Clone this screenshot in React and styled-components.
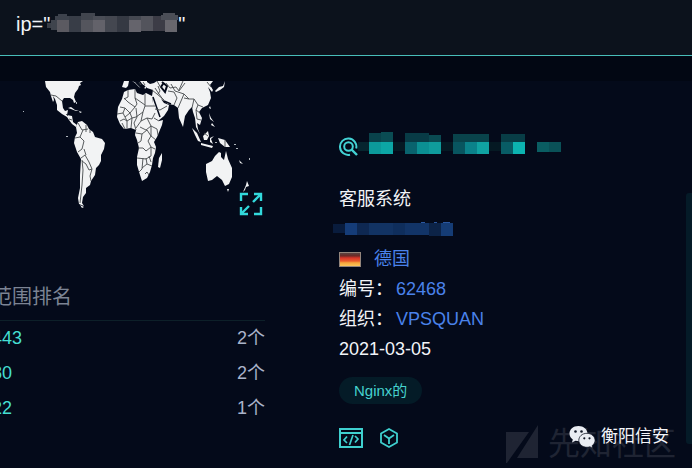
import styled, { createGlobalStyle } from "styled-components";


const ports = [
    { port: "443", count: 2 },
    { port: "80", count: 2 },
    { port: "22", count: 1 },
];

const queryMask = [
    [0, 10, 4, 5, "#3a3f48"],
    [4, 7, 6, 10, "#3f444d"],
    [8, 3, 14, 5, "#3d424c"],
    [11, 1, 9, 3, "#3d424c"],
    [10, 7, 12, 12, "#5b5a61"],
    [22, 3, 12, 16, "#383d47"],
    [34, 0, 14, 7, "#41454e"],
    [34, 7, 12, 12, "#54555d"],
    [46, 3, 12, 4, "#4a4d56"],
    [46, 7, 12, 12, "#63626a"],
    [58, 3, 12, 16, "#444750"],
    [70, 3, 12, 16, "#353943"],
    [82, 3, 12, 4, "#454851"],
    [82, 7, 12, 12, "#65646c"],
    [94, 3, 12, 15, "#53545c"],
    [106, 3, 12, 15, "#3c3c46"],
    [116, 0, 12, 3, "#4b4e57"],
    [114, 2, 17, 5, "#4b4e57"],
    [118, 7, 12, 12, "#68676e"],
];

const titleMask = [
    [0, 10, 12, 9, "#06252f"],
    [11, 1, 12, 9, "#09424b"],
    [23, 0, 12, 10, "#0a4c53"],
    [11, 10, 12, 12, "#0c9a9b"],
    [23, 10, 12, 12, "#0ca6a5"],
    [35, 10, 12, 9, "#051923"],
    [47, 1, 24, 9, "#083b46"],
    [71, 3, 12, 7, "#0a4a52"],
    [47, 10, 12, 12, "#09636e"],
    [59, 10, 12, 12, "#0b8f93"],
    [71, 10, 12, 12, "#0f9b9c"],
    [83, 10, 12, 9, "#051923"],
    [95, 2, 36, 8, "#09434b"],
    [95, 10, 12, 12, "#08555f"],
    [107, 10, 12, 12, "#0b828a"],
    [119, 10, 12, 12, "#10a3a2"],
    [131, 10, 12, 9, "#051923"],
    [143, 2, 24, 8, "#083d46"],
    [143, 10, 12, 12, "#085c65"],
    [155, 10, 12, 12, "#0cb3b0"],
    [179, 10, 12, 10, "#0a5d62"],
    [191, 10, 12, 10, "#0a5157"],
];

const hostMask = [
    [0, 2, 12, 9, "#091c3d"],
    [12, 1, 12, 12, "#153c78"],
    [24, 1, 12, 12, "#0e2852"],
    [36, 1, 24, 12, "#123363"],
    [60, 1, 12, 12, "#0f2e5c"],
    [72, 1, 24, 12, "#123467"],
    [96, 1, 12, 13, "#0c2347"],
    [108, 1, 12, 13, "#153c75"],
    [88, 0, 4, 1, "#2a57a0"],
    [101, 0, 3, 1, "#2a57a0"],
    [110, 0, 7, 1, "#2a57a0"],
];


const Mosaic = ({ cells, width, height, label }) => (
    <MosaicSvg width={width} height={height} viewBox={`0 0 ${width} ${height}`} role="img" aria-label={label}>
        {cells.map(([x, y, w, h, fill], i) => (
            <rect key={i} x={x} y={y} width={w} height={h} fill={fill} />
        ))}
    </MosaicSvg>
);


const WorldMap = () => (
    <MapSvg viewBox="0 81 265 135" aria-hidden="true">
        <g fill="#f2f3f4">
            {/* americas */}
            <path d="M45 81L46 87L50 92L51 96L53 102L54 100L53 96L55 99L57 105L57 110L62 114L67 117L69 120L72 124L76 127L77 125L73 122L72 116L67 115L68 110L65 111L63 108L62 101L64 98L70 98L73 100L74 103L76 102L74 97L75 93L78 89L79 86L81 85L80 83L83 81Z" />
            <path d="M76 127L78 122L82 121L87 125L89 129L93 132L95 137L102 139L105 143L104 149L101 155L101 161L99 165L96 168L95 175L91 181L90 185L86 188L86 193L83 197L82 203L84 206L79 204L78 198L80 188L80 175L81 159L77 152L74 143L75 137L77 133Z" />
            <path d="M68 108L71 107L75 110L79 111L76 111L71 109ZM79 111L82 112L80 113ZM80 205L84 207L82 208Z" />
            {/* europe and africa */}
            <path d="M124 81L129 81L128 86L126 88L122 87ZM132 81L139 84L141 88L139 87L135 83ZM140 81L147 81L147 87L145 89L143 85Z" />
            <path d="M124 92L128 90L135 89L137 93L143 95L146 93L152 96L153 103L157 116L159 121L163 120L162 125L157 137L154 142L156 147L155 153L153 158L152 165L150 172L147 178L142 181L140 175L137 165L137 157L139 148L137 140L135 135L136 130L131 128L124 129L120 124L117 117L118 107L122 99Z" />
            <path d="M162 153L162 160L160 168L158 167L159 158Z" />
            {/* asia */}
            <path d="M147 82L150 84L154 83L157 81L213 81L210 85L213 90L212 92L208 87L210 92L211 98L208 105L202 108L199 112L202 118L200 125L197 123L198 129L200 134L196 127L195 118L193 112L192 107L189 110L185 116L183 127L179 118L178 108L174 105L168 104L164 101L161 99L164 103L169 105L168 110L164 116L158 121L154 111L152 96L153 90L147 88Z" />
            <path d="M215 91L219 87L223 86L225 81L224 87L220 90L216 92ZM210 106L211 109L209 108ZM209 113L211 118L214 122L210 119ZM212 123L215 127L211 125Z" />
            <path d="M192 128L197 133L201 142L198 141L195 135ZM203 136L208 131L209 136L207 140L204 140ZM201 143L213 146L212 148L201 145ZM210 138L214 136L211 139L213 144L210 142ZM218 138L225 140L230 147L225 147L220 143Z" />
            {/* oceania */}
            <path d="M206 164L212 161L215 156L219 152L221 153L221 157L224 160L226 151L228 159L232 168L232 177L229 184L225 186L222 180L217 176L212 180L208 181L206 172ZM227 189L229 189L228 192ZM247 181L249 186L246 187L245 190L243 192L246 185ZM239 160L243 164L240 163Z" />
        </g>
        {/* seas */}
        <path d="M142 85L145 87M162 82L167 86L165 92L161 87L163 84M136 82L143 89" stroke="#040a1a" strokeWidth="2" fill="none" />
        <path d="M153 97L160 117M164 101L171 104" stroke="#040a1a" strokeWidth="1.5" fill="none" />
        {/* borders */}
        <g stroke="#454a4c" strokeWidth="0.9" fill="none">
            <path d="M51 95L56 96L62 101M66 114L68 116M69 119L72 120M78 123L82 130L88 129M86 125L86 132M90 130L90 133M75 138L80 137L83 130M78 152L82 149L84 141L80 137M81 158L85 155L89 162L92 169L89 170L86 164L82 161M82 160L83 170L82 185L80 203M92 169L90 176L91 181M84 149L86 155" />
            <path d="M124 98L128 102L135 107L130 113L125 108L120 107M128 90L128 97L124 99M135 89L135 98L137 104L135 107M145 94L145 106L155 106M135 98L145 105M117 114L123 113L125 108M123 113L125 117L130 113L132 118L136 117L143 112L145 106M136 108L137 117L134 123L136 130M120 121L124 119L127 121L127 128M125 117L127 121L132 118L131 128M122 123L125 129M143 112L141 121L136 128M141 121L147 118L152 119L155 113M147 118L151 126L146 130L140 127M136 133L142 134L141 141L138 143M142 134L147 130L151 136L148 141L151 147L146 151L143 148L138 148M151 126L157 129L158 135M151 136L156 140M151 126L151 136M137 158L146 159L151 156L151 147L155 149M143 158L142 169L139 172M142 168L147 164L152 166M147 164L146 158M149 156L151 162M154 118L159 121M145 174L147 172L149 175" />
            <path d="M155 88L159 94L164 101M152 90L157 94L164 100M155 109L160 110L167 106M157 81L161 88M158 86L160 91L158 94M166 83L170 88L176 87L179 91L185 83M168 91L174 92L177 98L174 105M171 84L175 91L184 94L181 101L178 108M183 81L179 90M184 94L189 99L194 99L192 108M189 99L184 98M194 99L198 105L196 110L200 113M198 105L203 107M196 110L197 119L201 120M207 82L211 87M204 133L208 136M225 140L225 147" />
            <path d="M139 82L141 85M143 82L145 85" />
        </g>
        <g fill="#aeb5bb">
            <rect x="23" y="111" width="1" height="1" />
            <rect x="66" y="136" width="2" height="1" />
            <rect x="76" y="102" width="1" height="2" />
            <rect x="234" y="144" width="2" height="1" />
            <rect x="236" y="148" width="2" height="1" />
            <rect x="249" y="158" width="1" height="2" />
            <rect x="215" y="142" width="2" height="1" />
        </g>
    </MapSvg>
);

const ExpandIcon = () => (
    <svg width="24" height="24" viewBox="0 0 24 24" fill="none" stroke="#32d9dc" strokeWidth="2.4" aria-hidden="true">
        <path d="M2 9V2H9M15 2H22V9M22 2L14 10M22 15V22H15M9 22H2V15M2 22L10 14" />
    </svg>
);

const SearchIcon = () => (
    <svg width="19" height="20" viewBox="0 0 19 20" fill="none" stroke="#43d3d5" strokeWidth="2" aria-hidden="true">
        <path d="M11 17.7A8.2 8.2 0 1 1 17.2 11.5" />
        <circle cx="9.5" cy="9.5" r="4.3" />
        <path d="M12.5 12.5L18 18" strokeWidth="2.4" />
    </svg>
);

const CodeIcon = () => (
    <svg width="24" height="20" viewBox="0 0 24 20" fill="none" stroke="#3fd0cf" strokeWidth="2" aria-hidden="true">
        <path d="M1 1H23V19H1ZM1 5H23" />
        <path d="M8 8.5L5 12L8 15M16 8L19 11L16 14.5M14 7L10.5 17" strokeWidth="1.7" />
    </svg>
);

const CubeIcon = () => (
    <svg width="20" height="20" viewBox="0 0 20 20" fill="none" stroke="#3fd0cf" strokeWidth="1.8" strokeLinejoin="round" aria-hidden="true">
        <path d="M10 1L18 5.5V14.5L10 19L2 14.5V5.5Z" />
        <path d="M5 7L10 10.5L15 7M10 10.5V16" />
    </svg>
);

const GermanFlag = () => (
    <svg width="22" height="15" viewBox="0 0 22 15" role="img" aria-label="德国">
        <defs>
            <linearGradient id="flag" x1="0" y1="0" x2="0" y2="1">
                <stop offset="0" stopColor="#5a4442" />
                <stop offset="0.22" stopColor="#6c2a26" />
                <stop offset="0.38" stopColor="#d8352a" />
                <stop offset="0.62" stopColor="#ea5b2c" />
                <stop offset="0.75" stopColor="#f5a53c" />
                <stop offset="1" stopColor="#fbc65a" />
            </linearGradient>
        </defs>
        <rect width="22" height="15" fill="#93857c" />
        <rect x="1" y="1" width="20" height="13" fill="url(#flag)" />
    </svg>
);

const WechatIcon = () => (
    <svg width="27" height="25" viewBox="0 0 27 25" aria-hidden="true">
        <path d="M9.500 1C4 1 0.500 4.500 0.500 8.500C0.500 11 1.800 13 3.800 14.500L3 17.500L6.500 15.800C8 16.200 9.500 16.300 10.500 16.200C13.500 15.500 18.500 13 18.500 8.500C18.500 4.500 14.500 1 9.500 1Z" fill="#e9ecf2" />
        <path d="M18 8.300C13 8.300 9.800 11.700 9.800 15.300C9.800 19.200 13.500 22.300 18 22.300C19 22.300 20 22.100 21 21.800L23.700 23.400L23.100 20.700C25 19.300 26.100 17.300 26.100 15.300C26.100 11.700 22.500 8.300 18 8.300Z" fill="#e9ecf2" stroke="#111726" strokeWidth="0.8" />
        <g fill="#111726">
            <circle cx="6.500" cy="6.500" r="1.300" />
            <circle cx="12.500" cy="6.500" r="1.300" />
            <circle cx="15.300" cy="13.300" r="1.100" />
            <circle cx="20.500" cy="13.300" r="1.100" />
        </g>
    </svg>
);

const XianzhiLogo = () => (
    <svg width="34" height="40" viewBox="0 0 34 40" fill="#1f2433" aria-hidden="true">
        <path d="M0 8H23L1 39H0Z" />
        <path d="M32 1V34H11Z" />
    </svg>
);


const App = () => {

    return (
        <>
            <GlobalStyle />
            <Page>
                <SearchBar>
                    <QueryInput aria-label="查询" defaultValue={`ip="${"\u00a0".repeat(23)}"`} />
                    <QueryMask>
                        <Mosaic cells={queryMask} width={132} height={20} label="ip" />
                    </QueryMask>
                </SearchBar>
                <Content>
                    <Aside>
                        <MapBox>
                            <WorldMap />
                            <ExpandButton aria-label="全屏">
                                <ExpandIcon />
                            </ExpandButton>
                        </MapBox>
                        <RankTable>
                            <caption>范围排名</caption>
                            <tbody>
                                {ports.map(({ port, count }) => (
                                    <tr key={port}>
                                        <th scope="row">{port}</th>
                                        <td>{count}个</td>
                                    </tr>
                                ))}
                            </tbody>
                        </RankTable>
                    </Aside>
                    <Result>
                        <ResultTitle>
                            <SearchIcon />
                            <Mosaic cells={titleMask} width={203} height={30} label="host" />
                        </ResultTitle>
                        <Line>客服系统</Line>
                        <HostLine>
                            <Mosaic cells={hostMask} width={120} height={15} label="ip" />
                        </HostLine>
                        <FlagLine>
                            <GermanFlag />
                            <BlueLink href="#country">德国</BlueLink>
                        </FlagLine>
                        <Line>编号：<BlueLink href="#asn">62468</BlueLink></Line>
                        <Line>组织：<BlueLink href="#org">VPSQUAN</BlueLink></Line>
                        <Line>2021-03-05</Line>
                        <Tag href="#nginx">Nginx的</Tag>
                        <Actions>
                            <IconButton aria-label="源码"><CodeIcon /></IconButton>
                            <IconButton aria-label="组件"><CubeIcon /></IconButton>
                        </Actions>
                    </Result>
                    <SidePanel />
                </Content>
                <Watermark>
                    <XianzhiLogo />
                    <span>先知社区</span>
                </Watermark>
                <Account>
                    <WechatIcon />
                    <span>衡阳信安</span>
                </Account>
            </Page>
        </>
    )
};

export default App;


const GlobalStyle = createGlobalStyle`
    * {
        box-sizing: border-box;
    }
    body {
        margin: 0;
        background: #040a1a;
        color: #f2f4f8;
        font-family: "Liberation Sans", "Noto Sans CJK SC", sans-serif;
        font-size: 18px;
    }
    svg {
        display: block;
        flex-shrink: 0;
    }
    a {
        text-decoration: none;
    }
    button {
        padding: 0;
        border: 0;
        background: none;
        cursor: pointer;
    }
`

const Page = styled.div`
    position: relative;
    min-height: 100vh;
    overflow: hidden;
`

const SearchBar = styled.header`
    position: relative;
    height: 56px;
    background: #0c121c;
    border-bottom: 1px solid #48bdb9;
`

const QueryInput = styled.input`
    display: block;
    width: 100%;
    height: 48px;
    padding: 0 16px;
    border: 0;
    outline: 0;
    background: transparent;
    color: #f2f4f8;
    font-family: inherit;
    font-size: 20px;
`

const QueryMask = styled.div`
    position: absolute;
    left: 47px;
    top: 13px;
`

const MosaicSvg = styled.svg`
    shape-rendering: crispEdges;
`

const Content = styled.main`
    display: grid;
    grid-template-columns: 265fr 273fr 6px;
    align-items: start;
    gap: 74px;
    border-top: 25px solid #020713;
`

const Aside = styled.aside`
    min-width: 0;
`

const MapBox = styled.div`
    position: relative;
`

const MapSvg = styled.svg`
    width: 100%;
    height: auto;
`

const ExpandButton = styled.button`
    position: absolute;
    right: 2px;
    bottom: 0;
`

const RankTable = styled.table`
    width: calc(100% + 8px);
    margin: 65px 0 0 -8px;
    border-collapse: collapse;
    caption {
        height: 40px;
        border-bottom: 1px solid #0d2029;
        color: #7c8494;
        font-size: 20px;
        line-height: 32px;
        text-align: left;
    }
    th, td {
        height: 35px;
        padding: 0;
        font-weight: 400;
        line-height: 35px;
        vertical-align: baseline;
    }
    th {
        color: #45dfd2;
        text-align: left;
    }
    td {
        color: #aab3ca;
        text-align: right;
    }
`

const Result = styled.section`
    padding-top: 50px;
    min-width: 0;
`

const ResultTitle = styled.div`
    display: flex;
    align-items: center;
    height: 32px;
    margin-bottom: 21px;
`

const Line = styled.div`
    display: flex;
    align-items: center;
    gap: 3px;
    height: 30px;
    line-height: 30px;
`

const HostLine = styled(Line)`
    margin-left: -6px;
`

const FlagLine = styled(Line)`
    gap: 13px;
`

const BlueLink = styled.a`
    color: #4a82ea;
`

const Tag = styled.a`
    display: block;
    width: fit-content;
    margin-top: 13px;
    padding: 0 15px;
    border-radius: 14px;
    background: #041b27;
    color: #45d2cf;
    font-size: 15px;
    line-height: 27px;
`

const Actions = styled.div`
    display: flex;
    gap: 16px;
    margin-top: 24px;
`

const IconButton = styled.button`
    display: block;
`

const SidePanel = styled.div`
    height: 251px;
    margin-top: 112px;
    border-radius: 3px 0 0 3px;
    background: #051b28;
`

const Watermark = styled.div`
    position: absolute;
    right: 16px;
    bottom: 2px;
    display: flex;
    align-items: center;
    gap: 8px;
    color: #1f2433;
    font-size: 32px;
    line-height: 44px;
`

const Account = styled.div`
    position: absolute;
    right: 23px;
    bottom: 18px;
    display: flex;
    align-items: center;
    gap: 5px;
    color: #f4f6fa;
    font-size: 17px;
    line-height: 26px;
`
